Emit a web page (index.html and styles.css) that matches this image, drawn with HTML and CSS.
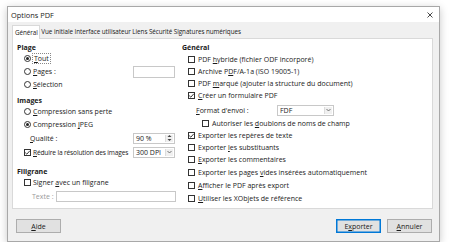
FILE: index.html
```html
<!DOCTYPE html>
<html lang="fr">
<head>
<meta charset="utf-8">
<title>Options PDF</title>
<link rel="stylesheet" href="styles.css">
</head>
<body>
<div class="dialog">
  <div class="titlebar">
    <span class="title">Options PDF</span>
    <svg class="close" width="6" height="6" viewBox="0 0 6 6"><path d="M0.5 0.5L5.5 5.5M5.5 0.5L0.5 5.5" stroke="#333" stroke-width="0.9"/></svg>
  </div>
  <div class="body">
    <div class="tabs">
      <div class="tab active">Général</div>
      <div class="tab">Vue initiale</div>
      <div class="tab">Interface utilisateur</div>
      <div class="tab">Liens</div>
      <div class="tab">Sécurité</div>
      <div class="tab">Signatures numériques</div>
    </div>
    <div class="panel">
      <div class="col left">
        <div class="head">Plage</div>
        <div class="row"><span class="rb on"></span><span class="focus"><u>T</u>out</span></div>
        <div class="row"><span class="rb"></span><span class="lbl"><u>P</u>ages :</span><span class="field pages"></span></div>
        <div class="row"><span class="rb"></span><span><u>S</u>élection</span></div>
        <div class="head h2">Images</div>
        <div class="row"><span class="rb"></span><span><u>C</u>ompression sans perte</span></div>
        <div class="row"><span class="rb on"></span><span>Compression <u>J</u>PEG</span></div>
        <div class="row tall sub"><span class="lbl"><u>Q</u>ualité :</span><span class="field spin">90 %<span class="spinbtn"><svg width="5" height="8" viewBox="0 0 5 8"><path d="M0.5 3L2.5 1L4.5 3Z M0.5 5L2.5 7L4.5 5Z" fill="#444"/></svg></span></span></div>
        <div class="row tall"><span class="cb on"><svg width="7" height="7" viewBox="0 0 7 7"><path d="M1.2 3.6L2.8 5.2L5.8 1.8" fill="none" stroke="#222" stroke-width="0.9"/></svg></span><span class="lbl tight"><u>R</u>éduire la résolution des images</span><span class="field select dpi">300 DPI<span class="dropbtn"><svg width="5" height="4" viewBox="0 0 5 4"><path d="M0.5 1L2.5 3L4.5 1" fill="none" stroke="#555" stroke-width="0.8"/></svg></span></span></div>
        <div class="head h3">Filigrane</div>
        <div class="row"><span class="cb"></span><span>Signer <u>a</u>vec un filigrane</span></div>
        <div class="row tall sub2"><span class="muted">Texte :</span><span class="field text"></span></div>
      </div>
      <div class="col right">
        <div class="head">Général</div>
        <div class="rrow"><span class="cb"></span><span>PDF <u>h</u>ybride (fichier ODF incorporé)</span></div>
        <div class="rrow"><span class="cb"></span><span>Archive P<u>D</u>F/A-1a (ISO 19005-1)</span></div>
        <div class="rrow"><span class="cb"></span><span>PDF <u>m</u>arqué (ajouter la structure du document)</span></div>
        <div class="rrow"><span class="cb on"><svg width="7" height="7" viewBox="0 0 7 7"><path d="M1.2 3.6L2.8 5.2L5.8 1.8" fill="none" stroke="#222" stroke-width="0.9"/></svg></span><span><u>C</u>réer un formulaire PDF</span></div>
        <div class="rrow fmt"><span class="fmtlabel"><u>F</u>ormat d'envoi :</span><span class="field select fdf">FDF<span class="dropbtn"><svg width="5" height="4" viewBox="0 0 5 4"><path d="M0.5 1L2.5 3L4.5 1" fill="none" stroke="#555" stroke-width="0.8"/></svg></span></span></div>
        <div class="rrow indent"><span class="cb"></span><span>Autoriser les <u>d</u>oublons de noms de champ</span></div>
        <div class="rrow"><span class="cb on"><svg width="7" height="7" viewBox="0 0 7 7"><path d="M1.2 3.6L2.8 5.2L5.8 1.8" fill="none" stroke="#222" stroke-width="0.9"/></svg></span><span>Exporter les repères de texte</span></div>
        <div class="rrow"><span class="cb"></span><span>Exporter <u>l</u>es substituants</span></div>
        <div class="rrow"><span class="cb"></span><span><u>E</u>xporter les commentaires</span></div>
        <div class="rrow gap"><span class="cb"></span><span>Exporter les pages <u>v</u>ides insérées automatiquement</span></div>
        <div class="rrow"><span class="cb"></span><span><u>A</u>fficher le PDF après export</span></div>
        <div class="rrow"><span class="cb"></span><span><u>U</u>tiliser les XObjets de référence</span></div>
      </div>
    </div>
    <div class="buttons">
      <button class="btn"><u>A</u>ide</button>
      <span class="spacer"></span>
      <button class="btn default">E<u>x</u>porter</button>
      <button class="btn"><u>A</u>nnuler</button>
    </div>
  </div>
</div>
</body>
</html>
```

FILE: styles.css
```css
html, body {
  margin: 0;
  padding: 0;
  background: #ffffff;
}
body {
  font-family: "Open Sans", "Noto Sans", sans-serif;
  font-size: 7px;
  color: #1a1a1a;
  white-space: nowrap;
}
u { text-decoration-thickness: 0.5px; text-underline-offset: 1px; }
.dialog {
  margin: 6px 0 0 7px;
  width: 431px;
  height: 234px;
  border: 1px solid #a8a8a8;
  box-shadow: 0 2px 8px rgba(0,0,0,0.22);
  display: flex;
  flex-direction: column;
  background: #f0f0f0;
}
.titlebar {
  height: 15px;
  background: #ffffff;
  display: flex;
  align-items: center;
  padding: 0 6px 0 3px;
}
.title { font-size: 7.4px; flex: 1; color: #222; }
.close { display: block; }
.body {
  flex: 1;
  padding: 3px 6px 0 4px;
  display: flex;
  flex-direction: column;
}
.tabs {
  display: flex;
  height: 13px;
  align-items: stretch;
  font-size: 6.3px;
  letter-spacing: -0.05px;
}
.tab {
  display: flex;
  align-items: center;
  padding: 0;
  margin-left: 1.5px;
}
.tab.active {
  background: #ffffff;
  border: 1px solid #d9d9d9;
  border-bottom: none;
  padding: 0 1px 0 2px;
  margin-left: 0;
  position: relative;
  z-index: 1;
  margin-bottom: -1px;
}
.panel {
  height: 169px;
  background: #ffffff;
  border: 1px solid #d9d9d9;
  display: flex;
}
.col { display: flex; flex-direction: column; padding-top: 3px; }
.left { width: 162px; padding-right: 7px; flex: none; }
.right { flex: 1; }
.head { height: 10px; display: flex; align-items: center; font-weight: 700; padding-left: 4px; }
.left .h2 { margin-top: 4px; }
.left .h3 { margin-top: 7px; }
.right .head { padding-left: 0; margin-bottom: 1px; }
.row {
  height: 13px;
  display: flex;
  align-items: center;
  padding-left: 11px;
  gap: 2px;
}
.row.tall { height: 14px; }
.row.sub { padding-left: 17px; }
.row.sub2 { padding-left: 19px; }
.lbl { flex: 1; min-width: 0; }
.lbl.tight { font-size: 6.6px; letter-spacing: -0.15px; }
.rrow {
  height: 12px;
  display: flex;
  align-items: center;
  padding-left: 6px;
  gap: 3px;
}
.rrow.fmt { height: 14px; margin-top: 2px; padding-left: 14px; }
.rrow.indent { padding-left: 20px; }
.rrow.gap { margin-top: 1px; height: 13px; }
.rrow.gap ~ .rrow { height: 13px; }
.fmtlabel { width: 78px; }
.rb, .cb {
  width: 7px;
  height: 7px;
  box-sizing: border-box;
  border: 1px solid #333;
  background: #fff;
  flex: none;
  display: flex;
  align-items: center;
  justify-content: center;
  position: relative;
}
.rb { border-radius: 50%; }
.rb.on::after {
  content: "";
  width: 3px;
  height: 3px;
  border-radius: 50%;
  background: #222;
}
.cb svg { position: absolute; left: -1px; top: -1px; }
.focus { outline: 1px dotted #888; outline-offset: 0; padding: 0 1px; }
.muted { color: #9a9a9a; }
.field {
  margin-left: auto;
  box-sizing: border-box;
  border: 1px solid #c8c8c8;
  background: #fff;
  height: 11px;
  display: flex;
  align-items: center;
  padding-left: 2px;
  position: relative;
  flex: none;
}
.field.pages { width: 42px; height: 12px; }
.field.spin { width: 42px; }
.field.dpi { width: 42px; }
.field.text { width: 120px; height: 11px; }
.field.fdf { margin-left: 0; width: 57px; height: 11px; }
.spinbtn, .dropbtn {
  position: absolute;
  right: 1px;
  top: 1px;
  bottom: 1px;
  width: 7px;
  display: flex;
  align-items: center;
  justify-content: center;
  background: #f0f0f0;
  border-left: 1px solid #dcdcdc;
}
.buttons {
  display: flex;
  margin-top: 10px;
  gap: 6px;
  padding: 0 1px 0 4px;
}
.spacer { flex: 1; }
.btn {
  font: inherit;
  width: 45px;
  height: 14px;
  padding: 0;
  background: #e1e1e1;
  border: 1px solid #adadad;
  color: #1a1a1a;
}
.btn.default { border-color: #0078d7; box-shadow: inset 0 0 0 0.5px #0078d7; }
```
